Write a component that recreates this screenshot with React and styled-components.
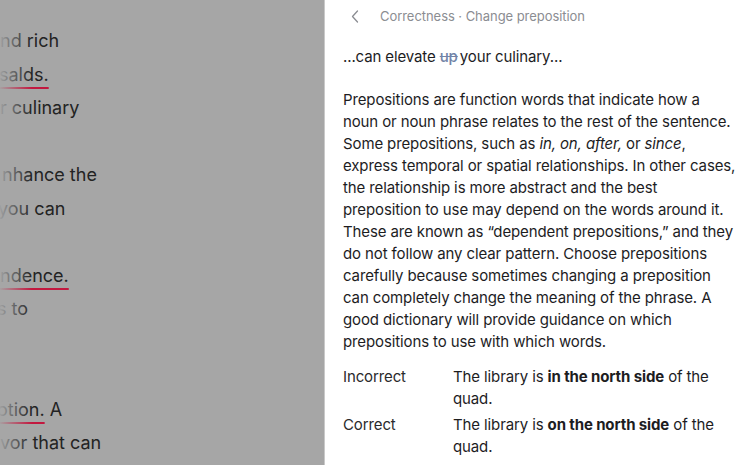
import React from "react";
import styled, { createGlobalStyle } from "styled-components";

const Global = createGlobalStyle`
  html, body { margin: 0; padding: 0; }
  body {
    width: 750px;
    height: 465px;
    overflow: hidden;
    font-family: Inter, "Noto Sans", sans-serif;
    -webkit-font-smoothing: antialiased;
  }
`;

const Screen = styled.div`
  display: flex;
  width: 750px;
  height: 465px;
  overflow: hidden;
  background: #ffffff;
`;

const Backdrop = styled.div`
  position: relative;
  flex: 0 0 324px;
  height: 100%;
  background: #a6a6a6;
  border-right: 1px solid #c9c9c9;
  overflow: hidden;
`;

const BackdropText = styled.div`
  display: flex;
  flex-direction: column;
  padding-top: 24px;
  font-size: 18px;
  line-height: 33.5px;
  color: #232323;
  white-space: nowrap;
`;

const BackdropLine = styled.div`
  flex-shrink: 0;
  height: 33.5px;
  margin-left: ${(p) => p.$shift || 0}px;
`;

const Misspelled = styled.span`
  text-decoration: underline;
  text-decoration-color: #c2183f;
  text-decoration-thickness: 2px;
  text-underline-offset: 6px;
`;

const Fade = styled.div`
  position: absolute;
  top: 0;
  left: 0;
  bottom: 0;
  width: 32px;
  background: linear-gradient(
    to right,
    rgba(166, 166, 166, 0.95) 0%,
    rgba(166, 166, 166, 0.6) 35%,
    rgba(166, 166, 166, 0) 100%
  );
  pointer-events: none;
`;

const Panel = styled.div`
  flex: 1;
  display: flex;
  flex-direction: column;
  padding: 0 13px 0 18px;
  color: #1d1d1f;
  letter-spacing: -0.12px;
  & > * { flex-shrink: 0; }
`;

const Header = styled.div`
  display: flex;
  align-items: center;
  height: 32px;
  padding-left: 8px;
  gap: 21px;
  color: #8b8d92;
  font-size: 13px;
  letter-spacing: -0.05px;
`;

const BackButton = styled.button`
  display: flex;
  align-items: center;
  justify-content: center;
  padding: 0;
  border: 0;
  background: none;
  color: #8b8d92;
  width: 8px;
  height: 14px;
`;

const Snippet = styled.div`
  margin-top: 14px;
  font-size: 15px;
  line-height: 22px;
`;

const Removed = styled.span`
  color: #7284a8;
  font-weight: 500;
  text-decoration: line-through;
  text-decoration-color: #7284a8;
  margin-right: 2px;
`;

const Body = styled.p`
  margin: 21px 0 0;
  font-size: 15px;
  line-height: 22px;
  width: 393px;
`;

const Examples = styled.div`
  display: grid;
  grid-template-columns: 110px 1fr;
  row-gap: 4px;
  margin-top: 13px;
  font-size: 15px;
  line-height: 22px;
  width: 393px;
`;

const Label = styled.div`
  color: #2a2a2c;
`;

const Sentence = styled.div`
  padding-right: 16px;
`;

const lines = [
  { text: "nd rich", shift: 0 },
  { text: "salds.", shift: -1, bad: true },
  { text: "r culinary", shift: 0 },
  null,
  { text: "nhance the", shift: 2 },
  { text: "you can", shift: -2 },
  null,
  { text: "ndence.", shift: 0, bad: true },
  { text: "s to", shift: -3 },
  null,
  null,
  { text: "otion.", shift: -3, bad: true, tail: " A" },
  { text: "vor that can", shift: 0 },
];

export default function App() {
  return (
    <>
      <Global />
      <Screen>
        <Backdrop>
          <BackdropText>
            {lines.map((l, i) =>
              l ? (
                <BackdropLine key={i} $shift={l.shift}>
                  {l.bad ? <Misspelled>{l.text}</Misspelled> : l.text}
                  {l.tail}
                </BackdropLine>
              ) : (
                <BackdropLine key={i} />
              )
            )}
          </BackdropText>
          <Fade />
        </Backdrop>
        <Panel>
          <Header>
            <BackButton aria-label="Back">
              <svg width="8" height="13" viewBox="0 0 8 13" fill="none">
                <path
                  d="M6.5 1 L1.5 6.5 L6.5 12"
                  stroke="currentColor"
                  strokeWidth="1.3"
                  strokeLinecap="round"
                  strokeLinejoin="round"
                />
              </svg>
            </BackButton>
            <span>Correctness · Change preposition</span>
          </Header>
          <Snippet>
            ...can elevate <Removed>up</Removed>your culinary...
          </Snippet>
          <Body>
            Prepositions are function words that indicate how a noun or noun
            phrase relates to the rest of the sentence. Some prepositions, such
            as <i>in, on, after,</i> or <i>since</i>, express temporal or
            spatial relationships. In other cases, the relationship is more
            abstract and the best preposition to use may depend on the words
            around it. These are known as “dependent prepositions,” and they do
            not follow any clear pattern. Choose prepositions carefully because
            sometimes changing a preposition can completely change the meaning
            of the phrase. A good dictionary will provide guidance on which
            prepositions to use with which words.
          </Body>
          <Examples>
            <Label>Incorrect</Label>
            <Sentence>
              The library is <b>in the north side</b> of the quad.
            </Sentence>
            <Label>Correct</Label>
            <Sentence>
              The library is <b>on the north side</b> of the quad.
            </Sentence>
          </Examples>
        </Panel>
      </Screen>
    </>
  );
}
